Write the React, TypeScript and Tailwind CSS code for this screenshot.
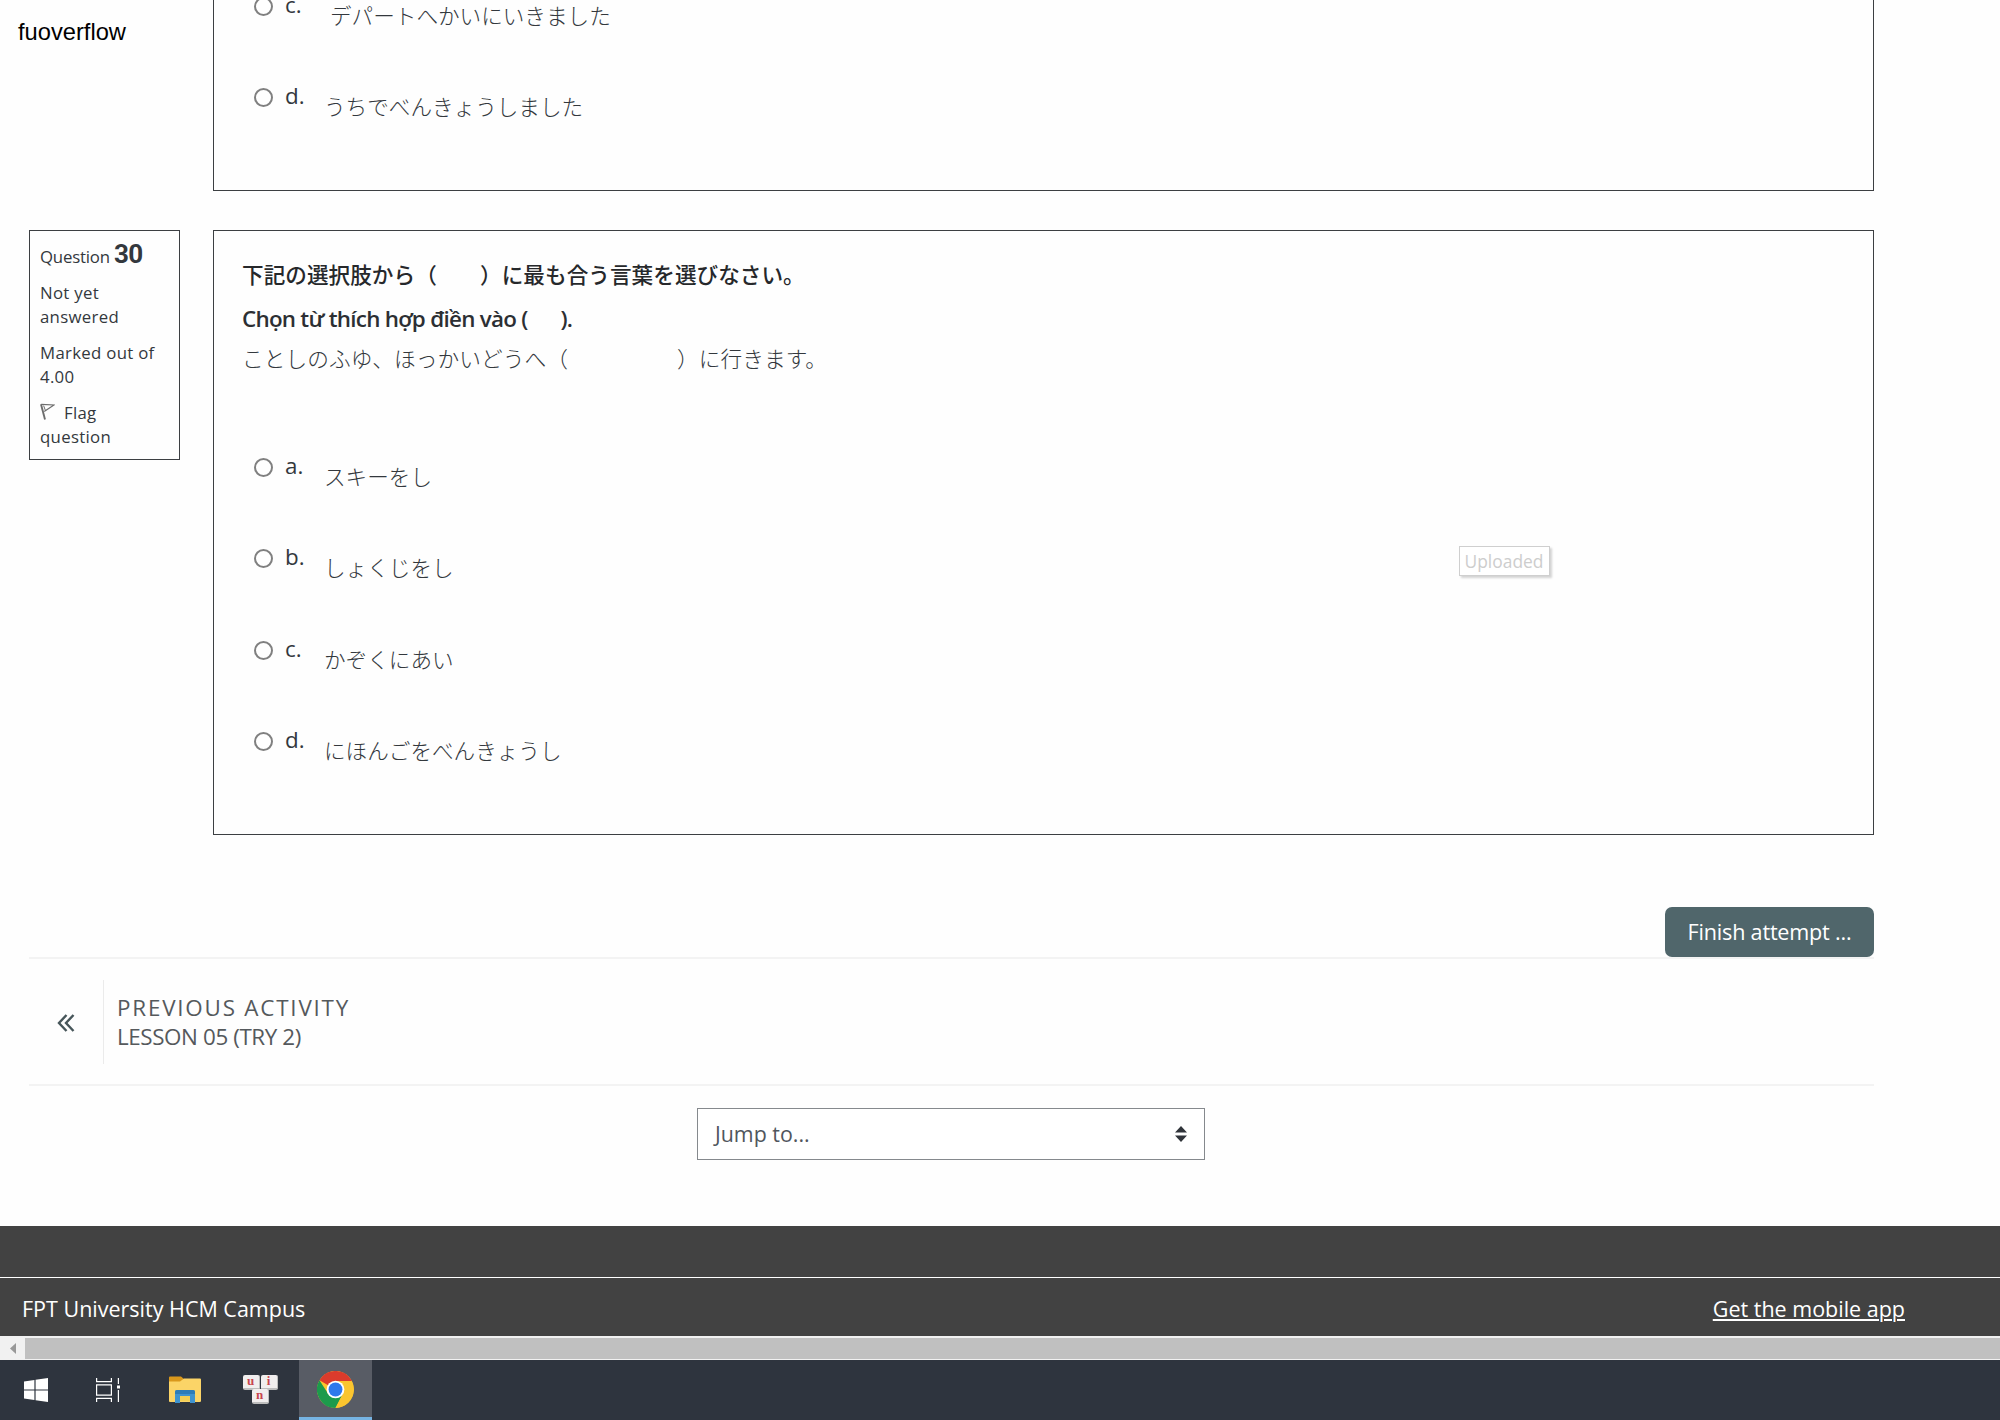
import React from "react";

const jp = "font-['Noto_Sans_CJK_JP',sans-serif]";

type Option = { letter: string; text: string; indent?: boolean };

const previousOptions: Option[] = [
  { letter: "c.", text: "デパートへかいにいきました", indent: true },
  { letter: "d.", text: "うちでべんきょうしました" },
];

const options: Option[] = [
  { letter: "a.", text: "スキーをし" },
  { letter: "b.", text: "しょくじをし" },
  { letter: "c.", text: "かぞくにあい" },
  { letter: "d.", text: "にほんごをべんきょうし" },
];

function OptionRow({ option }: { option: Option }) {
  return (
    <label className="flex h-[91.3px] items-start">
      <span className="mt-[9px] size-[19px] shrink-0 rounded-full border-2 border-[#808080] bg-white" />
      <span className="ml-[12px] w-[39px] shrink-0 text-[22.4px] leading-[34px] text-[#33383d]">{option.letter}</span>
      <span
        className={
          option.indent
            ? `${jp} ml-[6px] mt-[11px] text-[21.6px] font-light leading-[32px] text-[#33383d]`
            : `${jp} mt-[11px] text-[21.6px] font-light leading-[32px] text-[#33383d]`
        }
      >
        {option.text}
      </span>
    </label>
  );
}

function FlagIcon() {
  return (
    <svg className="mr-[9px] inline-block h-[17px] w-[15px] align-[-1px]" viewBox="0 0 15 17" fill="none" stroke="#6d6d6d">
      <path d="M1 1.2 L5 16.5" strokeWidth="1.9" />
      <path d="M1.2 1.4 L14 2 L4.2 8.6" strokeWidth="1.2" />
      <path d="M3.6 2.6 L5.4 7.4" strokeWidth="1" />
    </svg>
  );
}

function WindowsIcon() {
  return (
    <svg className="size-[24px]" viewBox="0 0 24 24" fill="#fff">
      <path d="M0 3.4 L10.4 1.9 V11.4 H0Z M11.6 1.7 L24 0 V11.4 H11.6Z M0 12.6 H10.4 V22.1 L0 20.6Z M11.6 12.6 H24 V24 L11.6 22.3Z" />
    </svg>
  );
}

function TaskViewIcon() {
  return (
    <svg className="size-[24px]" viewBox="0 0 24 24" fill="none" stroke="#fff" strokeWidth="1.2">
      <path d="M0.6 0 V3.6 H15.4 V0 M0.6 24 V20.4 H15.4 V24" />
      <path d="M0.6 6.8 H15.4 V17.2 H0.6Z" />
      <path d="M22.4 0 V6 M22.4 12 V24" />
      <path d="M21 7.5 H24 V10.5 H21Z" fill="#fff" stroke="none" />
    </svg>
  );
}

function FolderIcon() {
  return (
    <svg className="mb-px h-[27px] w-[32px]" viewBox="0 0 32 27">
      <path d="M0 1.5 Q0 0.5 1 0.5 H12 L15 3 H31 Q32 3 32 4 V25 H0Z" fill="#d9981c" />
      <path d="M0 5.5 H11 L15 2.6 H31 Q32 2.6 32 4 V24.5 Q32 26 31 26 H1 Q0 26 0 25Z" fill="#fbd467" />
      <path d="M6 27 V16 Q6 14 8 14 H24 Q26 14 26 16 V27 H21 V20 H11 V27Z" fill="#3f93cf" />
      <path d="M6 18 V16 Q6 14 8 14 H24 Q26 14 26 16 V18Z" fill="#2d7cb8" />
      <path d="M11 20 H21 V25 H11Z" fill="#f3cf55" />
    </svg>
  );
}

function Key({ children }: { children: string }) {
  return (
    <span className="flex h-[15px] w-[17px] items-center justify-center rounded-[2px] border-b-2 border-r border-[#bdbdbd] bg-[#f1eeee] pb-[2px] font-['Liberation_Serif',serif] text-[13px] font-bold leading-[11px] text-[#c8454d]">
      {children}
    </span>
  );
}

function KeysIcon() {
  return (
    <span className="mb-px flex w-[35px] flex-col items-center">
      <span className="flex gap-px">
        <Key>u</Key>
        <Key>i</Key>
      </span>
      <span className="-mt-px">
        <Key>n</Key>
      </span>
    </span>
  );
}

function ChromeIcon() {
  return (
    <svg className="size-[37px]" viewBox="0 0 48 48">
      <circle cx="24" cy="24" r="24" fill="#fbc52f" />
      <path d="M24 24 L3.2 12 A24 24 0 0 1 44.8 12 L44.8 13 H24Z" fill="#db3b2c" />
      <path d="M3.2 12 A24 24 0 0 0 24 48 L33.6 29.5 L24 24 L14.4 29.5Z" fill="#1c9a4c" />
      <path d="M24 48 L33.6 29.5 L24 24 L44.8 13 A24 24 0 0 1 24 48Z" fill="#fbc52f" />
      <circle cx="24" cy="24" r="11.5" fill="#fff" />
      <circle cx="24" cy="24" r="9" fill="#2f78ec" />
    </svg>
  );
}

export default function App() {
  return (
    <div className="flex h-[1420px] w-[2000px] flex-col overflow-hidden bg-[#fefefe] font-['Open_Sans',sans-serif] text-[#33383d]">
      <main className="flex h-[1226px] shrink-0 flex-col">
        <div className="flex h-[191px] shrink-0">
          <div className="w-[213px] shrink-0 pl-[18px] pt-[16px] font-['Liberation_Sans',sans-serif] text-[23.7px] leading-[32px] text-black">
            fuoverflow
          </div>
          <section className="flex h-[191px] w-[1661px] flex-col border border-t-0 border-[#3c3f42] pl-[40px]">
            <div className="-mt-[12px]">
              {previousOptions.map((o) => (
                <OptionRow key={o.letter} option={o} />
              ))}
            </div>
          </section>
        </div>

        <div className="mt-[39px] flex h-[605px] shrink-0 items-start pl-[29px]">
          <aside className="h-[230px] w-[151px] shrink-0 border border-[#3c3f42] pl-[10px] text-[16.8px] leading-[24px] tracking-[0.3px]">
            <h3 className="mt-[6px] h-[34px] whitespace-nowrap leading-[34px] tracking-[-0.2px]">
              Question <span className="font-['Roboto',sans-serif] text-[26px] font-bold tracking-[-0.5px]">30</span>
            </h3>
            <p className="mt-[10px] w-[100px]">Not yet answered</p>
            <p className="mt-[12px]">
              Marked out of
              <br />
              4.00
            </p>
            <p className="mt-[12px]">
              <FlagIcon />
              Flag
              <br />
              question
            </p>
          </aside>

          <section className="relative ml-[33px] h-[605px] w-[1661px] border border-[#3c3f42]">
            <div className="whitespace-pre pl-[28px]">
              <p className={`${jp} mt-[27px] text-[21.6px] font-medium leading-[32px] tracking-[0.05px] text-[#26282b]`}>
                下記の選択肢から（　　）に最も合う言葉を選びなさい。
              </p>
              <p className="mt-[12px] text-[22.4px] font-semibold leading-[34px] tracking-[-0.75px] text-[#2c2f33]">
                {"Chọn từ thích hợp điền vào ("}
                <span className="inline-block w-[33px]">{"     "}</span>
                {")."}
              </p>
              <p className={`${jp} mt-[5px] text-[21.7px] font-light leading-[34px] tracking-[0.08px]`}>
                ことしのふゆ、ほっかいどうへ（　　　　　）に行きます。
              </p>
            </div>
            <div className="ml-[40px] mt-[74px]">
              {options.map((o) => (
                <OptionRow key={o.letter} option={o} />
              ))}
            </div>
            <span className="absolute left-[1245px] top-[315px] flex h-[30px] w-[91px] items-center justify-center border border-[#cfcfcf] bg-white pr-px text-[17.4px] text-[#cdcdcd] shadow-[2px_2px_2px_#d4d4d4]">
              Uploaded
            </span>
          </section>
        </div>

        <div className="mt-[72px] flex h-[50px] w-[1874px] shrink-0 justify-end">
          <button className="h-[50px] w-[209px] rounded-[7px] bg-[#50666b] pb-[2px] text-[21.6px] leading-[47px] tracking-[-0.2px] text-white">
            Finish attempt ...
          </button>
        </div>

        <nav className="ml-[29px] flex h-[129px] w-[1845px] shrink-0 border-y-2 border-[#f3f3f3]">
          <div className="mt-[21px] flex h-[84px] w-[75px] items-center justify-center border-r border-[#ebebeb]">
            <svg className="mt-px h-[18px] w-[18px]" viewBox="0 0 18 18" fill="none" stroke="#47565a" strokeWidth="2.4">
              <path d="M9.5 1 L2 9 L9.5 17 M16.5 1 L9 9 L16.5 17" />
            </svg>
          </div>
          <div className="ml-[13px] mt-[34px] text-[22.4px] leading-[29px] text-[#55595c]">
            <p className="tracking-[1.8px]">PREVIOUS ACTIVITY</p>
            <p className="tracking-[-0.4px]">LESSON 05 (TRY 2)</p>
          </div>
        </nav>

        <div className="ml-[697px] mt-[22px] flex h-[52px] w-[508px] shrink-0 items-center justify-between border border-[#85898d] bg-white pl-[17px] pr-[17px] text-[21.4px] text-[#50565d]">
          <span>Jump to...</span>
          <svg className="h-[16px] w-[12px]" viewBox="0 0 12 16" fill="#30343a">
            <path d="M6 0 L12 6.6 H0Z M6 16 L12 9.4 H0Z" />
          </svg>
        </div>
      </main>

      <footer className="h-[110px] shrink-0 bg-[#424242] text-[21.5px] text-white">
        <div className="h-[52px] border-b border-white" />
        <div className="flex h-[58px] justify-between pl-[22px] pr-[95px] pt-[14px] leading-[34px]">
          <span>FPT University HCM Campus</span>
          <a className="underline decoration-2 underline-offset-[2px]">Get the mobile app</a>
        </div>
      </footer>

      <div className="flex h-[24px] shrink-0 bg-[#f1f1f1]">
        <div className="flex w-[25px] items-center justify-center">
          <svg className="h-[11px] w-[6px]" viewBox="0 0 6 11" fill="#989898">
            <path d="M6 0 V11 L0 5.5Z" />
          </svg>
        </div>
        <div className="mt-[2px] h-[21px] flex-1 bg-[#c0c0c0]" />
      </div>

      <div className="flex h-[60px] shrink-0 items-center bg-[#2e343e]">
        <div className="flex w-[72px] justify-center"><WindowsIcon /></div>
        <div className="flex w-[72px] justify-center"><TaskViewIcon /></div>
        <div className="flex w-[82px] justify-center"><FolderIcon /></div>
        <div className="flex w-[73px] justify-center pr-[5px]"><KeysIcon /></div>
        <div className="flex h-[60px] w-[73px] items-center justify-center border-b-[3px] border-[#76b4e3] bg-[#585c65] pr-px pt-[2px]">
          <ChromeIcon />
        </div>
      </div>
    </div>
  );
}
